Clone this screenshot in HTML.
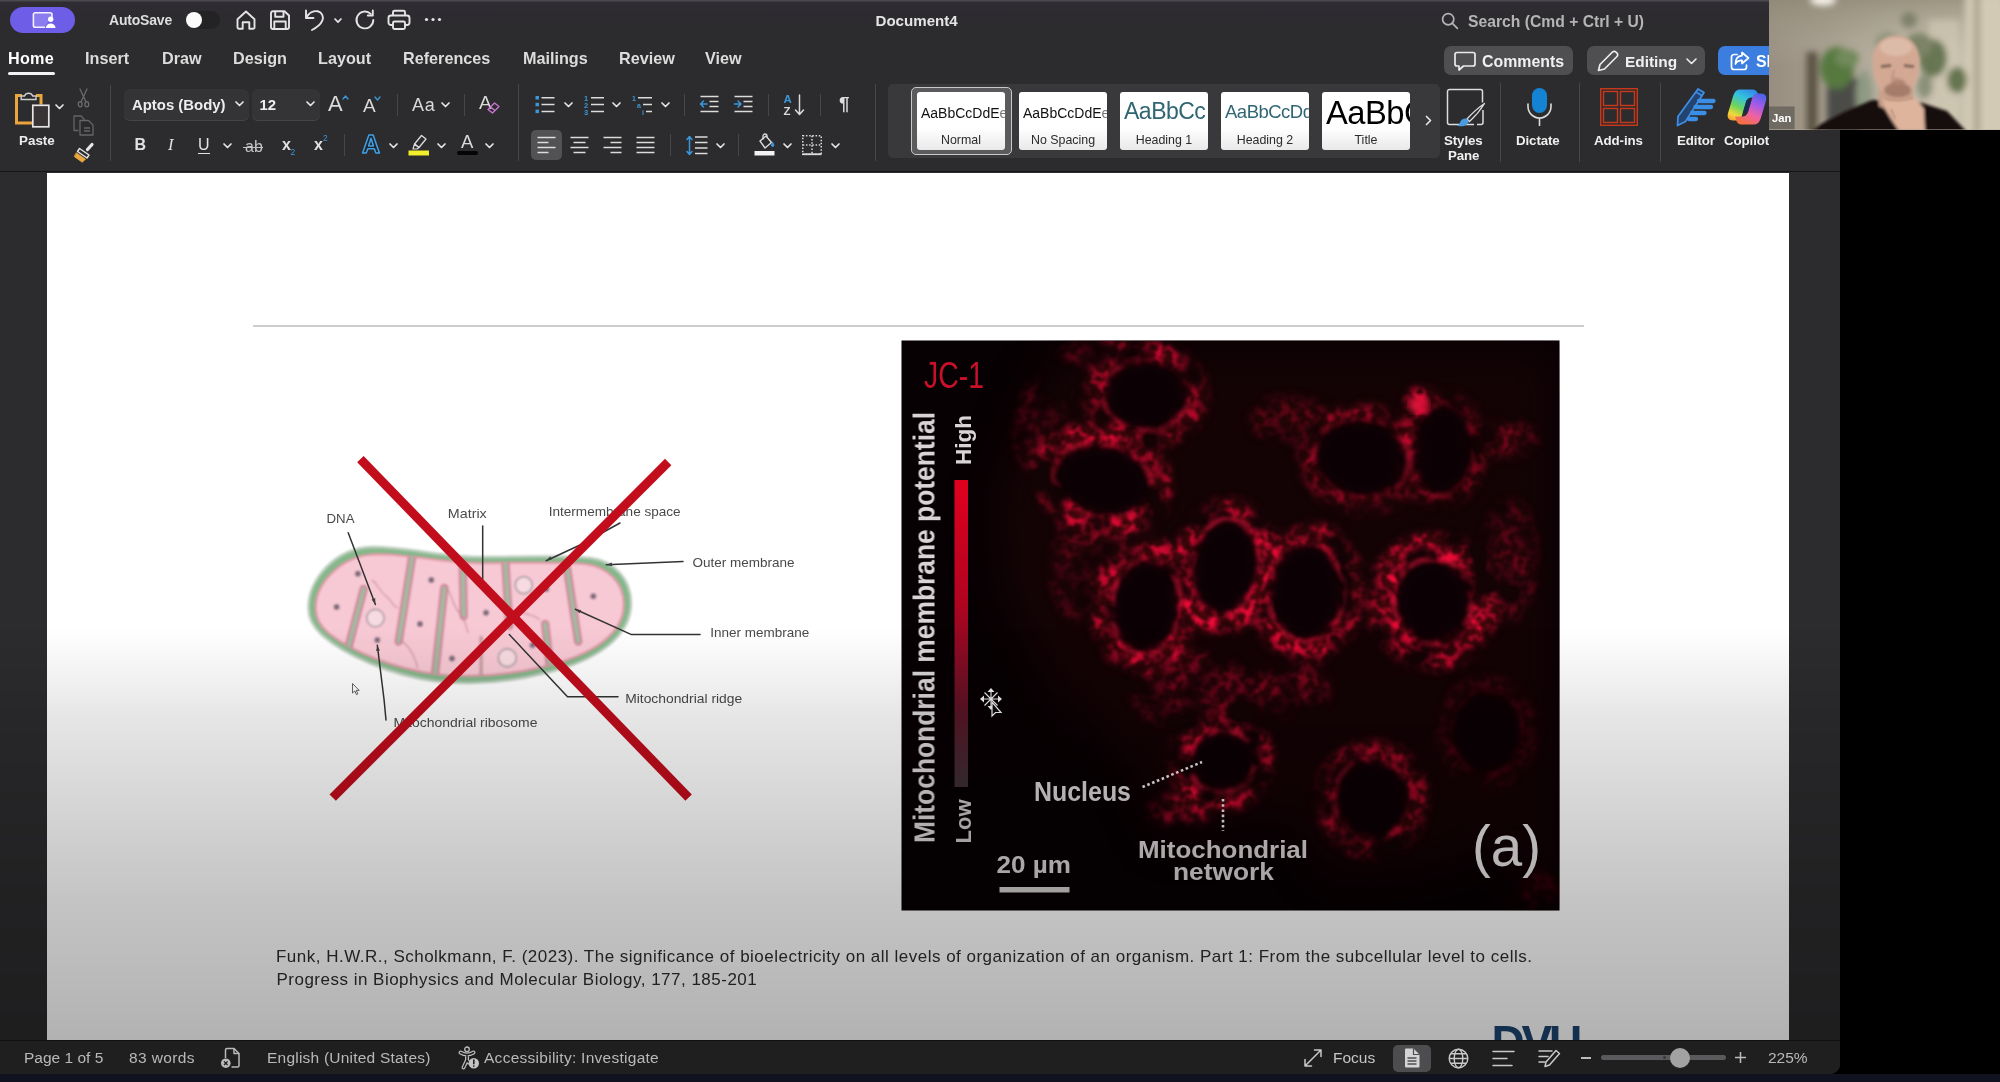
<!DOCTYPE html>
<html lang="en">
<head>
<meta charset="utf-8">
<title>Document4</title>
<style>
html,body{margin:0;padding:0;background:#000;}
body{width:2000px;height:1082px;overflow:hidden;position:relative;font-family:"Liberation Sans",sans-serif;color:#e6e6e6;}
.abs{position:absolute;}
#win{position:absolute;left:0;top:0;width:1840px;height:1074px;background:#2c2b2d;border-bottom-right-radius:10px;overflow:hidden;}
#topbar{position:absolute;left:0;top:0;width:1840px;height:172px;background:linear-gradient(to bottom,#4a4a4c 0,#4a4a4c 1px,#2f2c33 2px,#2d2b30 14px,#2c2b2d 30px,#2c2b2d 100%);border-bottom:1px solid #151515;box-sizing:border-box;}
#doc{position:absolute;left:47px;top:173px;width:1742px;height:867px;background:#fff;overflow:hidden;}
#shade{position:absolute;left:0;top:173px;width:1840px;height:867px;background:linear-gradient(to bottom,rgba(0,0,0,0) 0,rgba(0,0,0,0) 455px,rgba(0,0,0,0.03) 485px,rgba(0,0,0,0.1) 547px,rgba(0,0,0,0.16) 627px,rgba(0,0,0,0.23) 727px,rgba(0,0,0,0.30) 867px);pointer-events:none;}
#status{position:absolute;left:0;top:1040px;width:1840px;height:34px;background:#1f1f1f;border-top:1px solid #111;box-sizing:border-box;color:#b9b9b9;font-size:15.5px;}
#strip{position:absolute;left:0;top:1074px;width:2000px;height:8px;background:#10131f;}
#cam{position:absolute;left:1769.4px;top:0;width:231px;height:129.5px;overflow:hidden;background:#b9b3a4;}
.t{position:absolute;white-space:nowrap;line-height:1;}
#win,#cam{will-change:transform;}
.b{font-weight:bold;}
.tab{font-size:16.2px;color:#dcdcdc;}
.sep{position:absolute;width:1px;background:#474649;}
svg{position:absolute;overflow:visible;}
.card{position:absolute;top:92px;width:88px;height:58px;border-radius:3px;background:linear-gradient(to bottom,#fff 0,#fff 62%,#e9e9e9 100%);overflow:hidden;}
.ct{position:absolute;left:4px;width:84px;text-align:left;white-space:nowrap;line-height:1;overflow:hidden;}
.cl{position:absolute;left:0;top:42px;width:88px;text-align:center;font-size:12.4px;color:#2b2b2b;line-height:1;white-space:nowrap;}
.big{font-size:13.3px;color:#f0f0f0;letter-spacing:-0.1px;}
.cite{font-size:17px;color:#2e2e2e;letter-spacing:0.49px;}
.chev{fill:none;stroke:#e4e4e4;stroke-width:1.7;stroke-linecap:round;stroke-linejoin:round;}
</style>
</head>
<body>
<div id="win">
  <div id="topbar">
<!--TB1S-->
<!-- title row -->
<div class="abs" style="left:10.200px;top:6.900px;width:64.800px;height:25.800px;border-radius:13px;background:#6e5de6;"></div>
<svg style="left:32px;top:11px" width="25" height="18" viewBox="0 0 25 18"><path d="M12.500 16.200h-9.300a1.800 1.800 0 0 1-1.800-1.800v-10.800a1.800 1.800 0 0 1 1.800-1.800h15a1.800 1.800 0 0 1 1.800 1.800v2" fill="#8b7df0" stroke="#f4f2ff" stroke-width="1.600" stroke-linecap="round"/><circle cx="18.700" cy="8.300" r="2.700" fill="#fff"/><path d="M13.800 17c0.300-3 2.200-4.600 4.900-4.600s4.600 1.600 4.900 4.600z" fill="#fff"/></svg>
<div class="t b" id="t_autosave" style="left:109px;top:13.4px;font-size:14px;color:#dedede;letter-spacing:-0.2px;">AutoSave</div>
<div class="abs" style="left:187px;top:11px;width:33px;height:18px;border-radius:9px;background:#232224;"></div>
<div class="abs" style="left:186px;top:12px;width:16px;height:16px;border-radius:8px;background:#fbfbfb;"></div>
<!-- home -->
<svg style="left:235px;top:9px" width="22" height="22" viewBox="0 0 22 22" fill="none" stroke="#e4e4e4" stroke-width="1.9" stroke-linejoin="round" stroke-linecap="round"><path d="M2.500 10.200 11 2.500l8.500 7.700v8.300a1.200 1.200 0 0 1-1.200 1.200h-4v-6.400h-6.600v6.400h-4a1.200 1.200 0 0 1-1.200-1.200z"/></svg>
<!-- save -->
<svg style="left:269px;top:9px" width="22" height="22" viewBox="0 0 22 22" fill="none" stroke="#e4e4e4" stroke-width="1.9" stroke-linejoin="round"><path d="M2 4.200a2 2 0 0 1 2-2h11.500l4.500 4.300v11.500a2 2 0 0 1-2 2h-14a2 2 0 0 1-2-2z"/><path d="M6.200 2.500v5.300h8.300v-5.300"/><path d="M5.300 19.700v-7.200h11.400v7.200"/></svg>
<!-- undo -->
<svg style="left:304px;top:8px" width="22" height="24" viewBox="0 0 22 24" fill="none" stroke="#e4e4e4" stroke-width="1.9" stroke-linejoin="round" stroke-linecap="round"><path d="M2 2.500v7.500h7.500"/><path d="M2.300 9.700c2.500-4.600 7-7.400 11.500-6.400 4.200 1 6.200 5.300 4.500 9.400-1.600 3.800-5.600 6.900-10.300 9.300"/></svg>
<svg style="left:334px;top:18px" width="8" height="6" viewBox="0 0 8 6" fill="none" stroke="#e4e4e4" stroke-width="1.700" stroke-linecap="round" stroke-linejoin="round"><path d="M1 1l3 3.200 3-3.200"/></svg>
<!-- redo -->
<svg style="left:354px;top:9px" width="22" height="22" viewBox="0 0 22 22" fill="none" stroke="#e4e4e4" stroke-width="1.9" stroke-linejoin="round" stroke-linecap="round"><path d="M19.300 11a8.400 8.400 0 1 1-2.600-6.100"/><path d="M18.800 1.500v5h-5"/></svg>
<!-- print -->
<svg style="left:387px;top:9px" width="24" height="22" viewBox="0 0 24 22" fill="none" stroke="#e4e4e4" stroke-width="1.9" stroke-linejoin="round"><path d="M6 6.500v-3.200a1.500 1.500 0 0 1 1.500-1.500h9a1.500 1.500 0 0 1 1.500 1.500v3.200"/><rect x="1.500" y="6.500" width="21" height="9.500" rx="2.500"/><rect x="6" y="12.500" width="12" height="7.500" rx="1.500" fill="#2a292b"/></svg>
<!-- dots -->
<svg style="left:424px;top:17px" width="18" height="5" viewBox="0 0 18 5" fill="#e4e4e4"><circle cx="2.500" cy="2.500" r="1.600"/><circle cx="9" cy="2.500" r="1.600"/><circle cx="15.500" cy="2.500" r="1.600"/></svg>
<div class="t b" id="t_doc" style="left:875.5px;top:13px;font-size:15.1px;color:#e4e4e4;">Document4</div>
<!-- search -->
<svg style="left:1441px;top:12px" width="18" height="18" viewBox="0 0 18 18" fill="none" stroke="#b4b4b4" stroke-width="1.700" stroke-linecap="round"><circle cx="7.200" cy="7.200" r="5.600"/><path d="M11.400 11.400l5 5"/></svg>
<div class="t b" id="t_search" style="left:1468px;top:13.700px;font-size:15.700px;color:#b4b4b4;">Search (Cmd + Ctrl + U)</div>
<!-- tabs -->
<div class="t b" id="t_home" style="left:8px;top:49.900px;font-size:16.200px;color:#fff;letter-spacing:0.25px;">Home</div>
<div class="abs" style="left:8px;top:72px;width:47px;height:3px;border-radius:1.500px;background:#f2f2f2;"></div>
<div class="t b tab" id="t_insert" style="left:85px;top:49.900px;">Insert</div>
<div class="t b tab" id="t_draw" style="left:162px;top:49.900px;">Draw</div>
<div class="t b tab" id="t_design" style="left:233px;top:49.900px;">Design</div>
<div class="t b tab" id="t_layout" style="left:318px;top:49.900px;">Layout</div>
<div class="t b tab" id="t_refs" style="left:403px;top:49.900px;">References</div>
<div class="t b tab" id="t_mail" style="left:523px;top:49.900px;">Mailings</div>
<div class="t b tab" id="t_review" style="left:619px;top:49.900px;">Review</div>
<div class="t b tab" id="t_view" style="left:705px;top:49.900px;">View</div>
<!-- comments / editing / share -->
<div class="abs" style="left:1444px;top:46px;width:129px;height:29px;border-radius:7px;background:#4f4e51;"></div>
<svg style="left:1454px;top:51px" width="22" height="21" viewBox="0 0 22 21" fill="none" stroke="#ececec" stroke-width="1.700" stroke-linejoin="round"><path d="M3 1.500h16a2 2 0 0 1 2 2v9.500a2 2 0 0 1-2 2h-9.500l-4.500 4v-4h-2a2 2 0 0 1-2-2v-9.500a2 2 0 0 1 2-2z"/></svg>
<div class="t b" id="t_comments" style="left:1482px;top:53.500px;font-size:15.900px;color:#f0f0f0;">Comments</div>
<div class="abs" style="left:1587px;top:46px;width:118px;height:29px;border-radius:7px;background:#4f4e51;"></div>
<svg style="left:1597px;top:50px" width="22" height="22" viewBox="0 0 22 22" fill="none" stroke="#ececec" stroke-width="1.700" stroke-linejoin="round" stroke-linecap="round"><path d="M1.500 20.500l1.500-6 12.500-12.500a2.300 2.300 0 0 1 3.300 0l1.200 1.200a2.300 2.300 0 0 1 0 3.300l-12.500 12.500z"/></svg>
<div class="t b" id="t_editing" style="left:1625px;top:53.700px;font-size:15.400px;color:#f0f0f0;">Editing</div>
<svg style="left:1686px;top:58px" width="11" height="7" viewBox="0 0 11 7" fill="none" stroke="#ececec" stroke-width="1.600" stroke-linecap="round" stroke-linejoin="round"><path d="M1 1l4.500 4.500 4.500-4.500"/></svg>
<div class="abs" style="left:1718px;top:46px;width:80px;height:29px;border-radius:7px;background:#3c7ee0;"></div>
<svg style="left:1730px;top:51px" width="20" height="20" viewBox="0 0 20 20" fill="none" stroke="#fff" stroke-width="1.700" stroke-linejoin="round" stroke-linecap="round"><path d="M7 3.500h-3a2.500 2.500 0 0 0-2.500 2.500v10a2.500 2.500 0 0 0 2.500 2.500h10a2.500 2.500 0 0 0 2.500-2.500v-2"/><path d="M12 1.500l6.500 5.500-6.500 5.500v-3.200c-3.500 0-5.500 1.200-6.500 3.700 0-5 2.500-8 6.500-8.300z"/></svg>
<div class="t b" id="t_share" style="left:1756px;top:53.500px;font-size:15.900px;color:#fff;">Share</div>
<!--TB1E-->
<!--TB2S-->
<!-- clipboard group -->
<svg style="left:14px;top:89px" width="37" height="40" viewBox="0 0 37 40" fill="none">
<path d="M8 6.500h-5.500v27.500h15.500" stroke="#eaa63c" stroke-width="3"/>
<path d="M22 6.500h5v9" stroke="#eaa63c" stroke-width="3"/>
<path d="M7.200 10.500v-3.500h3.300a4.400 4.400 0 0 1 8.200 0h3.300v3.500z" stroke="#d0d0d0" stroke-width="1.400" fill="#2b2a2c"/>
<rect x="18.800" y="16.300" width="16" height="21.500" stroke="#e6e6e6" stroke-width="1.700" fill="#383436"/>
</svg>
<svg style="left:55px;top:104px" width="9" height="6" viewBox="0 0 9 6" fill="none" stroke="#e4e4e4" stroke-width="1.700" stroke-linecap="round" stroke-linejoin="round"><path d="M1 1l3.500 3.500 3.500-3.500"/></svg>
<div class="t b" id="t_paste" style="left:19px;top:133.500px;font-size:13.400px;color:#ececec;">Paste</div>
<!-- cut -->
<svg style="left:77px;top:88px" width="13" height="20" viewBox="0 0 13 20" fill="none" stroke="#6b6a6e" stroke-width="1.300" stroke-linecap="round"><path d="M3 1l6 13M10 1l-6 13"/><ellipse cx="3.200" cy="16.200" rx="1.900" ry="2.600"/><ellipse cx="9.800" cy="16.200" rx="1.900" ry="2.600"/></svg>
<!-- copy -->
<svg style="left:73px;top:115px" width="22" height="21" viewBox="0 0 22 21" fill="none" stroke="#656468" stroke-width="1.300" stroke-linejoin="round"><path d="M5.500 15.500h-4.500v-14.500h7l3 3v2"/><path d="M7 5.500h8.500l4.500 4.500v10h-13z" fill="#2a292b"/><path d="M11 13h6M11 16h6"/></svg>
<!-- format painter -->
<svg style="left:73px;top:141px" width="23" height="22" viewBox="0 0 23 22" fill="none" stroke-linejoin="round" stroke-linecap="round"><path d="M19 3.500l-4.500 5" stroke="#e8e8e8" stroke-width="3.200"/><path d="M6.500 7.500l9.500 6.500-2 3-9.500-6.500z" stroke="#e8e8e8" stroke-width="1.400" fill="#2b2a2c"/><path d="M3.500 12l9 6.200-3.300 3-7.700-5.500z" fill="#eaa83f" stroke="#eaa83f" stroke-width="0.800"/></svg>
<div class="sep" style="left:110px;top:85px;height:76px;"></div>
<!-- font boxes -->
<div class="abs" style="left:124px;top:89px;width:125px;height:31px;border-radius:6px;background:#343336;box-shadow:0 1px 0 #454447;"></div>
<div class="abs" style="left:252px;top:89px;width:68px;height:31px;border-radius:6px;background:#343336;box-shadow:0 1px 0 #454447;"></div>
<div class="t b" id="t_aptos" style="left:132px;top:97.500px;font-size:14.900px;color:#eeeeee;">Aptos (Body)</div>
<svg class="chev" style="left:235px;top:101px" width="9" height="6" viewBox="0 0 9 6"><path d="M1 1l3.500 3.500 3.500-3.500"/></svg>
<div class="t b" id="t_12" style="left:259.500px;top:97.500px;font-size:14.900px;color:#eeeeee;">12</div>
<svg class="chev" style="left:306px;top:101px" width="9" height="6" viewBox="0 0 9 6"><path d="M1 1l3.500 3.500 3.500-3.500"/></svg>
<!-- A^ Av -->
<div class="t" id="t_Abig" style="left:328px;top:93px;font-size:22px;color:#dadada;">A</div>
<svg style="left:342px;top:95px" width="7" height="5" viewBox="0 0 7 5" fill="none" stroke="#3b97d9" stroke-width="1.300" stroke-linecap="round" stroke-linejoin="round"><path d="M1 4l2.500-3 2.500 3"/></svg>
<div class="t" id="t_Asm" style="left:363px;top:96px;font-size:19px;color:#dadada;">A</div>
<svg style="left:374px;top:96px" width="7" height="5" viewBox="0 0 7 5" fill="none" stroke="#3b97d9" stroke-width="1.300" stroke-linecap="round" stroke-linejoin="round"><path d="M1 1l2.500 3 2.500-3"/></svg>
<div class="sep" style="left:397px;top:94px;height:22px;"></div>
<div class="t" id="t_Aa" style="left:412px;top:96px;font-size:18px;color:#dadada;letter-spacing:0.8px;">Aa</div>
<svg class="chev" style="left:441px;top:102px" width="9" height="6" viewBox="0 0 9 6"><path d="M1 1l3.500 3.500 3.500-3.500"/></svg>
<div class="sep" style="left:464px;top:94px;height:22px;"></div>
<div class="t" id="t_Aclr" style="left:479px;top:93px;font-size:19px;color:#dadada;">A</div>
<svg style="left:487px;top:101px" width="13" height="13" viewBox="0 0 13 13" fill="none" stroke="#c874d0" stroke-width="1.400" stroke-linejoin="round"><path d="M1 8.500l6.500-6.500 4.500 3.500-6.500 6.500z"/><path d="M3.500 6l4.500 3.500"/></svg>
<!-- row 2 -->
<div class="t b" id="t_B" style="left:134.500px;top:137px;font-size:16px;color:#e2e2e2;">B</div>
<div class="t" id="t_I" style="left:168px;top:137px;font-size:16.500px;color:#e2e2e2;font-family:'Liberation Serif',serif;font-style:italic;">I</div>
<div class="t" id="t_U" style="left:198px;top:137px;font-size:16px;color:#e2e2e2;">U</div>
<div class="abs" style="left:198px;top:152.500px;width:12px;height:1.400px;background:#e2e2e2;"></div>
<svg class="chev" style="left:223px;top:143px" width="9" height="6" viewBox="0 0 9 6"><path d="M1 1l3.500 3.500 3.500-3.500"/></svg>
<div class="t" id="t_ab" style="left:245px;top:138.500px;font-size:16px;color:#c4c4c4;">ab</div>
<div class="abs" style="left:243px;top:147px;width:20px;height:1.300px;background:#c4c4c4;"></div>
<div class="t b" id="t_x2" style="left:282px;top:137px;font-size:16px;color:#e2e2e2;">x</div>
<div class="t" id="t_x2s" style="left:290.500px;top:148px;font-size:8.500px;color:#3b97d9;">2</div>
<div class="t b" id="t_x3" style="left:314px;top:137px;font-size:16px;color:#e2e2e2;">x</div>
<div class="t" id="t_x3s" style="left:323px;top:134px;font-size:8.500px;color:#3b97d9;">2</div>
<div class="sep" style="left:344px;top:134px;height:22px;"></div>
<svg style="left:360px;top:132px" width="22" height="24" viewBox="0 0 22 24"><text x="11" y="21" text-anchor="middle" font-family="Liberation Sans, sans-serif" font-weight="bold" font-size="25" fill="#20242b" stroke="#3fa0e6" stroke-width="1.500" stroke-linejoin="round">A</text></svg>
<svg class="chev" style="left:389px;top:143px" width="9" height="6" viewBox="0 0 9 6"><path d="M1 1l3.500 3.500 3.500-3.500"/></svg>
<svg style="left:408px;top:133px" width="22" height="24" viewBox="0 0 22 24" fill="none" stroke-linejoin="round"><rect x="0.500" y="17.500" width="20.500" height="5" fill="#f3ee2d"/><path d="M13.500 2.500l4.500 3.500-7 8.500-4.500-3.500z" stroke="#dcdcdc" stroke-width="1.300"/><path d="M6.500 11l4.500 3.500-2 1.500h-4z" stroke="#dcdcdc" stroke-width="1.200"/></svg>
<svg class="chev" style="left:437px;top:143px" width="9" height="6" viewBox="0 0 9 6"><path d="M1 1l3.500 3.500 3.500-3.500"/></svg>
<div class="t" id="t_Afc" style="left:461px;top:133px;font-size:18.500px;color:#dadada;">A</div>
<div class="abs" style="left:457px;top:150.700px;width:20.500px;height:4.300px;border-radius:2px;background:#050505;"></div>
<svg class="chev" style="left:485px;top:143px" width="9" height="6" viewBox="0 0 9 6"><path d="M1 1l3.500 3.500 3.500-3.500"/></svg>
<div class="sep" style="left:518px;top:84px;height:77px;"></div>
<!--TB2E-->
<!--TB3S-->
<!-- paragraph group row1 -->
<svg style="left:535px;top:95px" width="20" height="19" viewBox="0 0 20 19" fill="none"><g fill="#3b97d9"><rect x="0.500" y="1" width="3.500" height="3.500"/><rect x="0.500" y="7.800" width="3.500" height="3.500"/><rect x="0.500" y="14.600" width="3.500" height="3.500"/></g><g stroke="#dcdcdc" stroke-width="1.500"><path d="M6.500 2.800h13M6.500 9.600h13M6.500 16.400h13"/></g></svg>
<svg class="chev" style="left:564px;top:102px" width="9" height="6" viewBox="0 0 9 6"><path d="M1 1l3.500 3.500 3.500-3.500"/></svg>
<svg style="left:584px;top:94px" width="21" height="21" viewBox="0 0 21 21" fill="none"><g font-family="Liberation Sans, sans-serif" font-size="7.500" font-weight="bold" fill="#3b97d9"><text x="0" y="6.500">1</text><text x="0" y="13.500">2</text><text x="0" y="20.500">3</text></g><g stroke="#dcdcdc" stroke-width="1.500"><path d="M7 3.800h13M7 10.600h13M7 17.400h13"/></g></svg>
<svg class="chev" style="left:612px;top:102px" width="9" height="6" viewBox="0 0 9 6"><path d="M1 1l3.500 3.500 3.500-3.500"/></svg>
<svg style="left:632px;top:94px" width="21" height="21" viewBox="0 0 21 21" fill="none"><g font-family="Liberation Sans, sans-serif" font-size="7" font-weight="bold" fill="#3b97d9"><text x="0" y="6.500">1</text><text x="5" y="13.500">a</text><text x="10" y="20.500">i</text></g><g stroke="#dcdcdc" stroke-width="1.500"><path d="M6 3.800h14M11 10.600h9M14 17.400h6"/></g></svg>
<svg class="chev" style="left:661px;top:102px" width="9" height="6" viewBox="0 0 9 6"><path d="M1 1l3.500 3.500 3.500-3.500"/></svg>
<div class="sep" style="left:684px;top:94px;height:22px;"></div>
<svg style="left:700px;top:95px" width="19" height="19" viewBox="0 0 19 19" fill="none" stroke="#dcdcdc" stroke-width="1.500"><path d="M0.500 1.500h18M9.500 6.500h9M9.500 11.500h9M0.500 16.500h18"/><path d="M7 9h-6.500M3.500 6l-3 3 3 3" stroke="#3b97d9" stroke-linecap="round" stroke-linejoin="round"/></svg>
<svg style="left:733.500px;top:95px" width="19" height="19" viewBox="0 0 19 19" fill="none" stroke="#dcdcdc" stroke-width="1.500"><path d="M0.500 1.500h18M9.500 6.500h9M9.500 11.500h9M0.500 16.500h18"/><path d="M0.500 9h6.500M4 6l3 3-3 3" stroke="#3b97d9" stroke-linecap="round" stroke-linejoin="round"/></svg>
<div class="sep" style="left:768px;top:94px;height:22px;"></div>
<svg style="left:783px;top:93px" width="23" height="24" viewBox="0 0 23 24" fill="none"><text x="0.500" y="10" font-family="Liberation Sans, sans-serif" font-size="11.500" font-weight="bold" fill="#3b97d9">A</text><text x="0.500" y="22" font-family="Liberation Sans, sans-serif" font-size="11.500" font-weight="bold" fill="#dcdcdc">Z</text><path d="M16.500 2v19M12.500 17l4 4.500 4-4.500" stroke="#dcdcdc" stroke-width="1.500" stroke-linecap="round" stroke-linejoin="round"/></svg>
<div class="sep" style="left:820px;top:94px;height:22px;"></div>
<div class="t b" id="t_pil" style="left:839px;top:94px;font-size:19px;color:#dcdcdc;">¶</div>
<!-- row2 -->
<div class="abs" style="left:531px;top:130px;width:31px;height:30px;border-radius:5px;background:#525154;"></div>
<svg style="left:537px;top:136px" width="19" height="19" viewBox="0 0 19 19" fill="none" stroke="#dcdcdc" stroke-width="1.500"><path d="M0.500 1.500h18M0.500 6.500h11M0.500 11.500h18M0.500 16.500h11"/></svg>
<svg style="left:570px;top:136px" width="19" height="19" viewBox="0 0 19 19" fill="none" stroke="#dcdcdc" stroke-width="1.500"><path d="M0.500 1.500h18M3.500 6.500h12M0.500 11.500h18M3.500 16.500h12"/></svg>
<svg style="left:603px;top:136px" width="19" height="19" viewBox="0 0 19 19" fill="none" stroke="#dcdcdc" stroke-width="1.500"><path d="M0.500 1.500h18M7.500 6.500h11M0.500 11.500h18M7.500 16.500h11"/></svg>
<svg style="left:636px;top:136px" width="19" height="19" viewBox="0 0 19 19" fill="none" stroke="#dcdcdc" stroke-width="1.500"><path d="M0.500 1.500h18M0.500 6.500h18M0.500 11.500h18M0.500 16.500h18"/></svg>
<div class="sep" style="left:670px;top:134px;height:22px;"></div>
<svg style="left:686px;top:135px" width="22" height="21" viewBox="0 0 22 21" fill="none" stroke="#dcdcdc" stroke-width="1.500"><path d="M9 2h12.500M9 7.500h12.500M9 13h12.500M9 18.500h12.500"/><path d="M3.500 2v17M1 4.500l2.500-3 2.500 3M1 16.500l2.500 3 2.500-3" stroke="#3b97d9" stroke-linecap="round" stroke-linejoin="round"/></svg>
<svg class="chev" style="left:715.500px;top:143px" width="9" height="6" viewBox="0 0 9 6"><path d="M1 1l3.500 3.500 3.500-3.500"/></svg>
<div class="sep" style="left:738px;top:134px;height:22px;"></div>
<svg style="left:754px;top:133px" width="22" height="24" viewBox="0 0 22 24" fill="none" stroke-linejoin="round"><rect x="0.500" y="18" width="20" height="4.500" fill="#f2f2f2"/><path d="M6 8l6-5 5.500 6.500-6.500 5.500z" stroke="#dcdcdc" stroke-width="1.400"/><path d="M9 6.500v-3.500a2 2 0 0 1 4 0v1" stroke="#dcdcdc" stroke-width="1.300"/><path d="M18.500 8.500c1 1.500 1.800 2.800 1.800 3.800a1.600 1.600 0 0 1-3.200 0c0-1 0.600-2.300 1.400-3.800z" fill="#3b97d9"/></svg>
<svg class="chev" style="left:782.500px;top:143px" width="9" height="6" viewBox="0 0 9 6"><path d="M1 1l3.500 3.500 3.500-3.500"/></svg>
<svg style="left:802px;top:135px" width="20" height="20" viewBox="0 0 20 20" fill="none" stroke="#dcdcdc"><path d="M0.750 0.750h18.500v18.500h-18.500zM10 0.750v18.500M0.750 10h18.500" stroke-width="1.500" stroke-dasharray="1.500 1.700"/><path d="M0.500 19.250h19" stroke-width="1.800"/></svg>
<svg class="chev" style="left:830.500px;top:143px" width="9" height="6" viewBox="0 0 9 6"><path d="M1 1l3.500 3.500 3.500-3.500"/></svg>
<div class="sep" style="left:875px;top:84px;height:77px;"></div>
<!-- styles gallery -->
<div class="abs" style="left:888px;top:84px;width:552px;height:74px;border-radius:5px;background:#39383b;"></div>
<div class="abs" style="left:911px;top:87px;width:101px;height:68px;border-radius:5px;box-sizing:border-box;border:1.500px solid #c9c9c9;background:#5b5a5d;"></div>
<div class="card" style="left:917px;"><div class="ct" id="t_c1" style="font-size:14px;color:#111;top:14px;">AaBbCcDdE<span style="color:#777">e</span></div><div class="cl" id="t_l1">Normal</div></div>
<div class="card" style="left:1019px;"><div class="ct" id="t_c2" style="font-size:14px;color:#111;top:14px;">AaBbCcDdE<span style="color:#777">e</span></div><div class="cl" id="t_l2">No Spacing</div></div>
<div class="card" style="left:1120px;"><div class="ct" id="t_c3" style="font-size:23px;color:#2f6672;top:8px;letter-spacing:-0.5px;">AaBbCc</div><div class="cl" id="t_l3">Heading 1</div></div>
<div class="card" style="left:1221px;"><div class="ct" id="t_c4" style="font-size:18.500px;color:#2f6672;top:11px;letter-spacing:-0.5px;">AaBbCcDd</div><div class="cl" id="t_l4">Heading 2</div></div>
<div class="card" style="left:1322px;"><div class="ct" id="t_c5" style="font-size:32.700px;color:#000;top:4.500px;letter-spacing:-0.5px;">AaBbC</div><div class="cl" id="t_l5">Title</div></div>
<svg class="chev" style="left:1425px;top:115px" width="7" height="11" viewBox="0 0 7 11"><path d="M1.500 1.500l4 4-4 4"/></svg>
<!-- big buttons -->
<svg style="left:1446px;top:88px" width="41" height="40" viewBox="0 0 41 40" fill="none" stroke-linejoin="round"><path d="M28 36.500h-24.500a2 2 0 0 1-2-2v-31a2 2 0 0 1 2-2h31a2 2 0 0 1 2 2v11" stroke="#dcdcdc" stroke-width="1.500"/><path d="M37 22v12.500a2 2 0 0 1-2 2h-4" stroke="#dcdcdc" stroke-width="1.500"/><path d="M38.500 15.500c-6 4-12 9.500-17.500 15.500l2.500 2.500c6-5.500 11-11.500 15-18z" stroke="#dcdcdc" stroke-width="1.300" fill="#2a292b"/><path d="M20.500 30.500c-3-0.500-5.500 1-6.500 4-0.500 1.500-1.500 2.500-3 3 3.500 1.500 8 1 10.500-1.500 1.500-1.500 1.500-3.500-1-5.500z" fill="#4a9be0"/></svg>
<div class="t b big" id="t_styles" style="left:1444px;top:133.500px;">Styles</div>
<div class="t b big" id="t_pane" style="left:1448px;top:148.500px;">Pane</div>
<div class="sep" style="left:1500px;top:83px;height:79px;"></div>
<svg style="left:1526px;top:87px" width="27" height="40" viewBox="0 0 27 40" fill="none"><rect x="6" y="1" width="15" height="25" rx="7.500" fill="#1583d4"/><path d="M2 17v2.500a11.500 11.500 0 0 0 23 0v-2.500" stroke="#dcdcdc" stroke-width="1.600" stroke-linecap="round"/><path d="M13.500 31v8" stroke="#dcdcdc" stroke-width="1.600"/></svg>
<div class="t b big" id="t_dictate" style="left:1516px;top:133.500px;">Dictate</div>
<div class="sep" style="left:1579px;top:83px;height:79px;"></div>
<svg style="left:1600px;top:88px" width="38" height="38" viewBox="0 0 38 38" fill="none" stroke="#c8391c" stroke-width="1.400"><rect x="0.700" y="0.700" width="36.600" height="36.600"/><rect x="3.500" y="3.500" width="14" height="14"/><rect x="20.500" y="3.500" width="14" height="14"/><rect x="3.500" y="20.500" width="14" height="14"/><rect x="20.500" y="20.500" width="14" height="14"/></svg>
<div class="t b big" id="t_addins" style="left:1594px;top:133.500px;">Add-ins</div>
<div class="sep" style="left:1660px;top:83px;height:79px;"></div>
<svg style="left:1676px;top:87px" width="40" height="40" viewBox="0 0 40 40" fill="none" stroke-linejoin="round"><path d="M22 2l6 3.500-18.500 29-8 4 0.500-9z" fill="#24436e" stroke="#3b8ee6" stroke-width="1.800"/><path d="M20 5l6.500 4" stroke="#3b8ee6" stroke-width="1.600"/><g stroke="#3b8ee6" stroke-width="4.300" stroke-linecap="round"><path d="M23 14h14.500M19.500 20h15.500M16 26h12.500M13 32h7"/></g></svg>
<div class="t b big" id="t_editor" style="left:1677px;top:133.500px;">Editor</div>
<svg style="left:1727px;top:88px" width="40" height="38" viewBox="0 0 40 38" fill="none"><defs><linearGradient id="cg1" x1="0.700" y1="0" x2="0.200" y2="1"><stop offset="0" stop-color="#2f8fe8"/><stop offset="0.300" stop-color="#35c3dc"/><stop offset="0.600" stop-color="#6fd45a"/><stop offset="0.850" stop-color="#f3d93a"/><stop offset="1" stop-color="#f5a53a"/></linearGradient><linearGradient id="cg2" x1="0.800" y1="0" x2="0.300" y2="1"><stop offset="0" stop-color="#4a63ea"/><stop offset="0.350" stop-color="#a95ae6"/><stop offset="0.650" stop-color="#ee62a4"/><stop offset="1" stop-color="#f5703a"/></linearGradient><filter id="cpb"><feGaussianBlur stdDeviation="0.400"/></filter></defs><g filter="url(#cpb)"><path d="M13 1.500h12.500c2.600 0 4.400 1.400 5.200 3.800l1.300 4.200h-7.500c-2.600 0-4.400 1.400-5.200 3.800l-4.600 15c-0.800 2.600-2.800 4.200-5.400 4.200h-3.300c-4.300 0-6.300-3-5-7.200l5-16.800c1.400-4.600 3.400-7 7-7z" fill="url(#cg1)"/><path d="M27 36.500h-12.500c-2.600 0-4.400-1.400-5.200-3.800l-1.300-4.200h7.500c2.600 0 4.400-1.400 5.200-3.800l4.600-15c0.800-2.600 2.800-4.200 5.400-4.200h3.300c4.300 0 6.300 3 5 7.200l-5 16.800c-1.400 4.600-3.400 7-7 7z" fill="url(#cg2)"/><path d="M19.500 12l-3.600 12.500h5l3.600-12.500z" fill="#1a2a55" opacity="0.850"/></g></svg>
<div class="t b big" id="t_copilot" style="left:1724px;top:133.500px;">Copilot</div>
<!--TB3E-->
  </div>
  <div id="doc">
<!--DOCS-->
<div class="abs" style="left:-47px;top:-173px;width:2000px;height:1082px;">
<div class="abs" style="left:252.500px;top:325px;width:1331px;height:2px;background:#cdcdcd;"></div>
<div class="t cite" id="t_cite1" style="left:276px;top:947.600px;">Funk, H.W.R., Scholkmann, F. (2023). The significance of bioelectricity on all levels of organization of an organism. Part 1: From the subcellular level to cells.</div>
<div class="t cite" id="t_cite2" style="left:276.500px;top:971.100px;">Progress in Biophysics and Molecular Biology, 177, 185-201</div>
<div class="t b" id="t_dvu" style="left:1491.500px;top:1019px;font-size:46px;color:#1d4571;letter-spacing:-3.200px;">DVU</div>
<svg style="left:0;top:0" width="2000" height="1082" viewBox="0 0 2000 1082">
<defs><filter id="soft" x="-5%" y="-5%" width="110%" height="110%"><feGaussianBlur stdDeviation="0.800"/></filter>
<filter id="soft2" x="-5%" y="-5%" width="110%" height="110%"><feGaussianBlur stdDeviation="0.550"/></filter>
<clipPath id="inclip"><path d="M308.5 608C308 580 335 548 372 547C410 547 440 557 480 557C520 557 560 555 590 558C615 561 631 580 631 603C631 635 600 660 545 673C510 682 470 685 435 681C390 675 345 655 322 635C312 626 308.5 618 308.5 608z" transform="translate(469.7 615.5) scale(0.955 0.895) translate(-469.7 -615.5)"/></clipPath></defs>
<g filter="url(#soft)">
<path d="M308.5 608C308 580 335 548 372 547C410 547 440 557 480 557C520 557 560 555 590 558C615 561 631 580 631 603C631 635 600 660 545 673C510 682 470 685 435 681C390 675 345 655 322 635C312 626 308.5 618 308.5 608z" fill="#84b78a" stroke="#bccdbd" stroke-width="2.500"/>
<path d="M308.5 608C308 580 335 548 372 547C410 547 440 557 480 557C520 557 560 555 590 558C615 561 631 580 631 603C631 635 600 660 545 673C510 682 470 685 435 681C390 675 345 655 322 635C312 626 308.5 618 308.5 608z" transform="translate(469.7 615.5) scale(0.955 0.895) translate(-469.7 -615.5)" fill="#f7c9d4" stroke="#e394a8" stroke-width="2.200"/>
<g clip-path="url(#inclip)" fill="none"><path d="M348.2 648.0L363.7 589.0" stroke="#d67f99" stroke-width="8.5" stroke-linecap="round"/><path d="M412.3 556.0L398.7 641.4" stroke="#d67f99" stroke-width="8.5" stroke-linecap="round"/><path d="M434.6 678.0L444.3 588.0" stroke="#d67f99" stroke-width="8.5" stroke-linecap="round"/><path d="M462.7 563.0L463.7 616.0" stroke="#d67f99" stroke-width="8.5" stroke-linecap="round"/><path d="M505.4 563.0L509.3 625.8" stroke="#d67f99" stroke-width="8.5" stroke-linecap="round"/><path d="M545.2 624.0L550.0 667.0" stroke="#d67f99" stroke-width="8.5" stroke-linecap="round"/><path d="M566.5 565.0L578.2 641.4" stroke="#d67f99" stroke-width="8.5" stroke-linecap="round"/><path d="M348.2 648.0L363.7 589.0" stroke="#a3b9a0" stroke-width="4.6" stroke-linecap="round"/><path d="M412.3 556.0L398.7 641.4" stroke="#a3b9a0" stroke-width="4.6" stroke-linecap="round"/><path d="M434.6 678.0L444.3 588.0" stroke="#a3b9a0" stroke-width="4.6" stroke-linecap="round"/><path d="M462.7 563.0L463.7 616.0" stroke="#a3b9a0" stroke-width="4.6" stroke-linecap="round"/><path d="M505.4 563.0L509.3 625.8" stroke="#a3b9a0" stroke-width="4.6" stroke-linecap="round"/><path d="M545.2 624.0L550.0 667.0" stroke="#a3b9a0" stroke-width="4.6" stroke-linecap="round"/><path d="M566.5 565.0L578.2 641.4" stroke="#a3b9a0" stroke-width="4.6" stroke-linecap="round"/><path d="M481.100 680L481.100 636" stroke="#dc8fa5" stroke-width="3.500"/><path d="M481.100 680L481.100 636" stroke="#a3b9a0" stroke-width="1.200"/><path d="M372 580c6 4 8 12 14 16s6 10 12 12M444 585c8 6 8 20 14 26s8 14 10 22M400 640c10 6 14 16 18 28M520 610c6 6 14 4 20 10" fill="none" stroke="#c9899b" stroke-width="1.100"/></g>
<circle cx="375.4" cy="618.1" r="8.7" fill="#f8dbe2" stroke="#a79aa3" stroke-width="1.600"/><circle cx="523.8" cy="585.1" r="8.5" fill="#f8dbe2" stroke="#a79aa3" stroke-width="1.600"/><circle cx="507.3" cy="657.9" r="9.0" fill="#f8dbe2" stroke="#a79aa3" stroke-width="1.600"/>
<circle cx="357.9" cy="573.8" r="3" fill="#7d6a7c"/><circle cx="336.6" cy="607.0" r="3" fill="#7d6a7c"/><circle cx="431.3" cy="579.9" r="3" fill="#7d6a7c"/><circle cx="420.0" cy="623.9" r="3" fill="#7d6a7c"/><circle cx="486.0" cy="612.8" r="3" fill="#7d6a7c"/><circle cx="377.3" cy="640.0" r="3" fill="#7d6a7c"/><circle cx="452.0" cy="658.4" r="3" fill="#7d6a7c"/><circle cx="593.3" cy="596.2" r="3" fill="#7d6a7c"/><circle cx="546.2" cy="589.0" r="3" fill="#7d6a7c"/><circle cx="532.6" cy="645.2" r="3" fill="#7d6a7c"/>
</g><g filter="url(#soft2)"><g fill="none" stroke="#333" stroke-width="1.500" stroke-linecap="round" stroke-linejoin="round">
<path d="M348.200 532.700L375.400 604.500"/><path d="M482.700 526L482.700 579.300"/><path d="M620 523L580 545L546.200 560.800"/>
<path d="M683 561.500L606.300 564.700"/><path d="M575.300 609.300L631.500 634.600L700 634.600"/>
<path d="M509.300 634.600L567.500 696.700L618 696.700"/><path d="M377.300 645.200L384.100 700L386 720"/>
</g>
<g fill="#3e3e3e"><path d="M375.400 604.500l-3.800-5 3.600-1.400z"/><path d="M546.200 560.800l4-4.600 1.600 3.400z"/><path d="M606.300 564.700l5.500-2.200 0.200 3.800z"/><path d="M575.300 609.300l5.800 0.600-1.600 3.400z"/><path d="M377.300 645.200l2.600 5.400-3.800 0.400z"/></g>
</g>
<g filter="url(#soft2)" font-family="Liberation Sans, sans-serif" font-size="12.600" fill="#4a4a4a">
<text x="326.500" y="522.500" textLength="28" lengthAdjust="spacingAndGlyphs">DNA</text>
<text x="447.800" y="518" textLength="39" lengthAdjust="spacingAndGlyphs">Matrix</text>
<text x="548.700" y="515.800" textLength="132" lengthAdjust="spacingAndGlyphs">Intermembrane space</text>
<text x="692.500" y="566.500" textLength="102" lengthAdjust="spacingAndGlyphs">Outer membrane</text>
<text x="710.300" y="637" textLength="99" lengthAdjust="spacingAndGlyphs">Inner membrane</text>
<text x="625.200" y="702.500" textLength="117" lengthAdjust="spacingAndGlyphs">Mitochondrial ridge</text>
<text x="393.400" y="727.300" textLength="144" lengthAdjust="spacingAndGlyphs">Mitochondrial ribosome</text>
</g>
<g filter="url(#soft2)" stroke="#c1101f" stroke-width="9" stroke-linecap="butt">
<path d="M360.400 459.100L688.600 797.600"/><path d="M668.200 462L332.700 797.600"/>
</g>
<path d="M352.500 683.500v9.500l2.300-2 1.700 3.600 1.400-0.700-1.700-3.500h3z" fill="#fff" stroke="#555" stroke-width="0.900"/>
</svg>
<svg style="left:0;top:0" width="2000" height="1082" viewBox="0 0 2000 1082">
<defs>
<filter id="mb" color-interpolation-filters="sRGB" x="-10%" y="-10%" width="120%" height="120%"><feGaussianBlur stdDeviation="5"/></filter>
<filter id="gb" color-interpolation-filters="sRGB" x="-10%" y="-10%" width="120%" height="120%"><feGaussianBlur stdDeviation="22"/></filter>
<filter id="nb" color-interpolation-filters="sRGB" x="-10%" y="-10%" width="120%" height="120%"><feGaussianBlur stdDeviation="3"/></filter>
<filter id="speck" x="0" y="0" width="100%" height="100%" color-interpolation-filters="sRGB"><feTurbulence type="fractalNoise" baseFrequency="0.11" numOctaves="2" seed="7"/><feColorMatrix type="matrix" values="0 0 0 0 0.95  0 0 0 0 0.04  0 0 0 0 0.22  4.2 0 0 0 -1.75"/><feGaussianBlur stdDeviation="0.9"/></filter>
<filter id="tb" color-interpolation-filters="sRGB" x="-5%" y="-5%" width="110%" height="110%"><feGaussianBlur stdDeviation="0.7"/></filter>
<filter id="blotch" x="0" y="0" width="100%" height="100%" color-interpolation-filters="sRGB"><feTurbulence type="fractalNoise" baseFrequency="0.03" numOctaves="2" seed="11"/><feColorMatrix type="matrix" values="0 0 0 0 0  0 0 0 0 0  0 0 0 0 0  3.2 0 0 0 -1.25"/></filter>
<mask id="rings" maskUnits="userSpaceOnUse" x="901.5" y="340.5" width="658" height="570"><g filter="url(#mb)"><ellipse cx="1146" cy="395" rx="50" ry="42" transform="rotate(0 1146 395)" fill="none" stroke="#fff" stroke-opacity="0.75" stroke-width="22"/><ellipse cx="1103" cy="480" rx="57" ry="44" transform="rotate(15 1103 480)" fill="none" stroke="#fff" stroke-opacity="0.9" stroke-width="24"/><ellipse cx="1225" cy="567" rx="40" ry="56" transform="rotate(10 1225 567)" fill="none" stroke="#fff" stroke-opacity="1" stroke-width="22"/><ellipse cx="1146" cy="606" rx="42" ry="56" transform="rotate(5 1146 606)" fill="none" stroke="#fff" stroke-opacity="0.85" stroke-width="24"/><ellipse cx="1306" cy="592" rx="45" ry="58" transform="rotate(0 1306 592)" fill="none" stroke="#fff" stroke-opacity="0.9" stroke-width="24"/><ellipse cx="1433" cy="601" rx="50" ry="53" transform="rotate(0 1433 601)" fill="none" stroke="#fff" stroke-opacity="1" stroke-width="30"/><ellipse cx="1361" cy="458" rx="53" ry="45" transform="rotate(10 1361 458)" fill="none" stroke="#fff" stroke-opacity="0.55" stroke-width="20"/><ellipse cx="1442" cy="450" rx="36" ry="50" transform="rotate(5 1442 450)" fill="none" stroke="#fff" stroke-opacity="0.45" stroke-width="16"/><ellipse cx="1222" cy="761" rx="40" ry="38" transform="rotate(0 1222 761)" fill="none" stroke="#fff" stroke-opacity="1" stroke-width="22"/><ellipse cx="1372" cy="799" rx="45" ry="47" transform="rotate(0 1372 799)" fill="none" stroke="#fff" stroke-opacity="0.65" stroke-width="22"/><ellipse cx="1487" cy="732" rx="41" ry="47" transform="rotate(0 1487 732)" fill="none" stroke="#fff" stroke-opacity="0.18" stroke-width="18"/><ellipse cx="1420" cy="402" rx="15" ry="14" fill="#fff" fill-opacity="0.9"/><ellipse cx="1500" cy="440" rx="40" ry="18" fill="#fff" fill-opacity="0.5"/><ellipse cx="1510" cy="560" rx="28" ry="60" fill="#fff" fill-opacity="0.35"/><ellipse cx="1190" cy="690" rx="60" ry="40" fill="#fff" fill-opacity="0.4"/><ellipse cx="1075" cy="560" rx="25" ry="60" fill="#fff" fill-opacity="0.3"/><ellipse cx="1040" cy="430" rx="25" ry="50" fill="#fff" fill-opacity="0.3"/><ellipse cx="1110" cy="350" rx="60" ry="14" fill="#fff" fill-opacity="0.4"/><ellipse cx="1290" cy="690" rx="40" ry="25" fill="#fff" fill-opacity="0.45"/><ellipse cx="1290" cy="420" rx="40" ry="25" fill="#fff" fill-opacity="0.3"/><ellipse cx="1180" cy="810" rx="30" ry="16" fill="#fff" fill-opacity="0.7"/><ellipse cx="1540" cy="890" rx="16" ry="20" fill="#fff" fill-opacity="0.25"/></g><rect x="901.5" y="340.5" width="658" height="570" filter="url(#blotch)"/></mask>
<filter id="rb" color-interpolation-filters="sRGB" x="-10%" y="-10%" width="120%" height="120%"><feGaussianBlur stdDeviation="2.2"/></filter>
<filter id="blotch2" x="0" y="0" width="100%" height="100%" color-interpolation-filters="sRGB"><feTurbulence type="fractalNoise" baseFrequency="0.045" numOctaves="2" seed="23"/><feColorMatrix type="matrix" values="0 0 0 0 1  0 0 0 0 1  0 0 0 0 1  3.5 0 0 0 -1.35"/></filter>
<mask id="rimmask" maskUnits="userSpaceOnUse" x="901.5" y="340.5" width="658" height="570"><rect x="901.5" y="340.5" width="658" height="570" filter="url(#blotch2)"/></mask>
<clipPath id="mclip"><rect x="901.5" y="340.5" width="658" height="570"/></clipPath>
<linearGradient id="cbar" x1="0" y1="0" x2="0" y2="1"><stop offset="0" stop-color="#e0001e"/><stop offset="0.4" stop-color="#b00420"/><stop offset="0.75" stop-color="#5a1426"/><stop offset="1" stop-color="#3c3036"/></linearGradient>
</defs>
<rect x="901.5" y="340.5" width="658" height="570" fill="#070103"/>
<g clip-path="url(#mclip)">
<g filter="url(#gb)" opacity="0.8"><path d="M1060 345L1559 345L1559 905L1530 905L1500 840L1440 870L1330 880L1290 820L1250 830L1160 840L1130 760L1060 700L1000 600L990 500L1030 400z" fill="#170406"/></g>
<g mask="url(#rings)"><rect x="901.5" y="340.5" width="658" height="570" fill="#42070c"/><rect x="901.5" y="340.5" width="658" height="570" filter="url(#speck)"/></g>
<g filter="url(#nb)" opacity="0.85"><ellipse cx="1146" cy="395" rx="40" ry="32" transform="rotate(0 1146 395)" fill="#0b0205"/><ellipse cx="1103" cy="480" rx="46" ry="33" transform="rotate(15 1103 480)" fill="#0b0205"/><ellipse cx="1225" cy="567" rx="30" ry="46" transform="rotate(10 1225 567)" fill="#0b0205"/><ellipse cx="1146" cy="606" rx="31" ry="45" transform="rotate(5 1146 606)" fill="#0b0205"/><ellipse cx="1306" cy="592" rx="34" ry="47" transform="rotate(0 1306 592)" fill="#0b0205"/><ellipse cx="1433" cy="601" rx="36" ry="39" transform="rotate(0 1433 601)" fill="#0b0205"/><ellipse cx="1361" cy="458" rx="44" ry="36" transform="rotate(10 1361 458)" fill="#0b0205"/><ellipse cx="1442" cy="450" rx="29" ry="43" transform="rotate(5 1442 450)" fill="#0b0205"/><ellipse cx="1222" cy="761" rx="30" ry="28" transform="rotate(0 1222 761)" fill="#0b0205"/><ellipse cx="1372" cy="799" rx="35" ry="37" transform="rotate(0 1372 799)" fill="#0b0205"/><ellipse cx="1487" cy="732" rx="33" ry="39" transform="rotate(0 1487 732)" fill="#0b0205"/></g>
<g filter="url(#nb)" id="brightblob"><ellipse cx="1419" cy="404" rx="10" ry="9" fill="#e4123c" opacity="0.9"/><ellipse cx="1414" cy="408" rx="4" ry="4" fill="#f5204a" opacity="0.6"/></g>
<g mask="url(#rimmask)"><g filter="url(#rb)"><ellipse cx="1146" cy="395" rx="43.5" ry="35.5" transform="rotate(0 1146 395)" fill="none" stroke="#e8143c" stroke-opacity="0.45" stroke-width="5"/><ellipse cx="1103" cy="480" rx="49.5" ry="36.5" transform="rotate(15 1103 480)" fill="none" stroke="#e8143c" stroke-opacity="0.54" stroke-width="5"/><ellipse cx="1225" cy="567" rx="33.5" ry="49.5" transform="rotate(10 1225 567)" fill="none" stroke="#e8143c" stroke-opacity="0.6" stroke-width="5"/><ellipse cx="1146" cy="606" rx="34.5" ry="48.5" transform="rotate(5 1146 606)" fill="none" stroke="#e8143c" stroke-opacity="0.51" stroke-width="5"/><ellipse cx="1306" cy="592" rx="37.5" ry="50.5" transform="rotate(0 1306 592)" fill="none" stroke="#e8143c" stroke-opacity="0.54" stroke-width="5"/><ellipse cx="1433" cy="601" rx="39.5" ry="42.5" transform="rotate(0 1433 601)" fill="none" stroke="#e8143c" stroke-opacity="0.6" stroke-width="5"/><ellipse cx="1361" cy="458" rx="47.5" ry="39.5" transform="rotate(10 1361 458)" fill="none" stroke="#e8143c" stroke-opacity="0.33" stroke-width="5"/><ellipse cx="1442" cy="450" rx="32.5" ry="46.5" transform="rotate(5 1442 450)" fill="none" stroke="#e8143c" stroke-opacity="0.27" stroke-width="5"/><ellipse cx="1222" cy="761" rx="33.5" ry="31.5" transform="rotate(0 1222 761)" fill="none" stroke="#e8143c" stroke-opacity="0.6" stroke-width="5"/><ellipse cx="1372" cy="799" rx="38.5" ry="40.5" transform="rotate(0 1372 799)" fill="none" stroke="#e8143c" stroke-opacity="0.39" stroke-width="5"/><ellipse cx="1487" cy="732" rx="36.5" ry="42.5" transform="rotate(0 1487 732)" fill="none" stroke="#e8143c" stroke-opacity="0.108" stroke-width="5"/></g></g>
</g>
<g filter="url(#tb)" font-family="Liberation Sans, sans-serif">
<text x="924" y="387.500" font-size="37" fill="#c8102a" textLength="60" lengthAdjust="spacingAndGlyphs">JC-1</text>
<text transform="translate(934.500 843) rotate(-90)" font-size="29" font-weight="bold" fill="#d9d5d6" textLength="431" lengthAdjust="spacingAndGlyphs">Mitochondrial membrane potential</text>
<text transform="translate(970.500 465) rotate(-90)" font-size="22.500" font-weight="bold" fill="#d9d5d6" textLength="50" lengthAdjust="spacingAndGlyphs">High</text>
<text transform="translate(970.500 843.500) rotate(-90)" font-size="22.500" font-weight="bold" fill="#c9c5c6" textLength="44" lengthAdjust="spacingAndGlyphs">Low</text>
<rect x="954.500" y="480" width="13.500" height="307" fill="url(#cbar)"/>
<text x="1034" y="800.500" font-size="28" font-weight="bold" fill="#d6d2d3" textLength="97" lengthAdjust="spacingAndGlyphs">Nucleus</text>
<text x="1138" y="858" font-size="24.500" font-weight="bold" fill="#d6d2d3" textLength="170" lengthAdjust="spacingAndGlyphs">Mitochondrial</text>
<text x="1173" y="879.800" font-size="24.500" font-weight="bold" fill="#d6d2d3" textLength="101" lengthAdjust="spacingAndGlyphs">network</text>
<text x="996.500" y="873" font-size="24.500" font-weight="bold" fill="#d6d2d3" textLength="74.500" lengthAdjust="spacingAndGlyphs">20 µm</text>
<rect x="999.500" y="887" width="70" height="5.500" fill="#d2cecf"/>
<text x="1472" y="866" font-size="57" fill="#e6e2e3" textLength="69" lengthAdjust="spacingAndGlyphs">(a)</text>
<path d="M1142.500 787L1202 762" stroke="#e8e4e5" stroke-width="2.600" stroke-dasharray="2.600 2.600"/>
<path d="M1223 799L1223 831" stroke="#e8e4e5" stroke-width="2.600" stroke-dasharray="2.600 2.600"/>
</g>
<!-- move cursor -->
<g transform="translate(991 699)" fill="none" stroke="#f0f0f0" stroke-width="1.100"><path d="M-9 0h18M0 -9v18M-6.500 -6.500l13 13M6.500 -6.500l-13 13"/><path d="M0 -11l-3.500 4h7zM0 11l-3.500 -4h7zM-11 0l4 -3.500v7zM11 0l-4 -3.500v7z" fill="#f0f0f0" stroke="none"/><path d="M1 3v14l3.500 -3.500 5.500 0z" fill="#0a0a0a" stroke="#f4f4f4" stroke-width="1.200"/></g>
</svg>
</div>
<!--DOCE-->
  </div>
  <div id="shade"></div>
  <div id="status">
<!--STS-->
<div class="t" id="t_page" style="left:24px;top:9px;">Page 1 of 5</div>
<div class="t" id="t_words" style="left:129px;top:9px;letter-spacing:0.39px;">83 words</div>
<svg style="left:220px;top:6px" width="21" height="22" viewBox="0 0 21 22" fill="none" stroke="#b9b9b9" stroke-width="1.500" stroke-linejoin="round"><path d="M5.500 11v-8a1.500 1.500 0 0 1 1.500-1.500h7l5 5v12a1.500 1.500 0 0 1-1.500 1.500h-6"/><path d="M14 1.500v5h5"/><circle cx="5.800" cy="16.200" r="4.800" fill="#b9b9b9" stroke="none"/><path d="M4 14.400l3.600 3.600M7.600 14.400l-3.600 3.600" stroke="#1f1f1f" stroke-width="1.300"/></svg>
<div class="t" id="t_lang" style="left:267px;top:9px;letter-spacing:0.22px;">English (United States)</div>
<svg style="left:458px;top:5px" width="22" height="24" viewBox="0 0 22 24" fill="none" stroke-linecap="round" stroke-linejoin="round"><g stroke="#bdbdbd" stroke-width="4"><path d="M2.500 6.500c4 2.500 9 2.500 13 0M9 8.500v5.500M9 14l-3.500 7.500M9 14l1.500 2.500"/></g><g stroke="#1f1f1f" stroke-width="1.500"><path d="M2.500 6.500c4 2.500 9 2.500 13 0M9 8.500v5.500M9 14l-3.500 7.500M9 14l1.500 2.500"/></g><circle cx="9" cy="3.300" r="2.300" fill="#1f1f1f" stroke="#bdbdbd" stroke-width="1.300"/><circle cx="15.800" cy="17.200" r="5.200" fill="#c4c4c4"/><path d="M15.800 14v3.800M15.800 20v0.200" stroke="#1f1f1f" stroke-width="1.600"/></svg>
<div class="t" id="t_acc" style="left:484px;top:9px;letter-spacing:0.27px;">Accessibility: Investigate</div>
<svg style="left:1303px;top:7px" width="20" height="20" viewBox="0 0 20 20" fill="none" stroke="#c9c9c9" stroke-width="1.500" stroke-linecap="round" stroke-linejoin="round"><path d="M2 18l16-16M11.500 2h6.500v6.500M2 11.500v6.500h6.500"/></svg>
<div class="t" id="t_focus" style="left:1333px;top:9px;color:#c6c6c6;">Focus</div>
<div class="abs" style="left:1393px;top:4px;width:38px;height:27px;border-radius:5px;background:#4d4c4f;"></div>
<svg style="left:1404px;top:7px" width="16" height="20" viewBox="0 0 16 20"><path d="M2 0.500h7.500l6 6v12a1 1 0 0 1-1 1h-12.500a1 1 0 0 1-1-1v-17a1 1 0 0 1 1-1z" fill="#d4d4d4"/><path d="M9.500 0.500v6h6" fill="none" stroke="#4d4c4f" stroke-width="1.200"/><path d="M3.500 10h9M3.500 13h9M3.500 16h9" stroke="#4d4c4f" stroke-width="1.300"/></svg>
<svg style="left:1448px;top:7px" width="21" height="21" viewBox="0 0 21 21" fill="none" stroke="#c9c9c9" stroke-width="1.400"><circle cx="10.500" cy="10.500" r="9.300"/><ellipse cx="10.500" cy="10.500" rx="4.300" ry="9.300"/><path d="M1.200 10.500h18.600M2.500 5.800h16M2.500 15.200h16"/></svg>
<svg style="left:1492px;top:9px" width="23" height="17" viewBox="0 0 23 17" fill="none" stroke="#c9c9c9" stroke-width="1.500" stroke-linecap="round"><path d="M1 1.500h21M1 8.500h14M1 15.500h19"/></svg>
<svg style="left:1538px;top:7px" width="23" height="20" viewBox="0 0 23 20" fill="none" stroke="#c9c9c9" stroke-width="1.500" stroke-linecap="round" stroke-linejoin="round"><path d="M1 3h13M1 8.500h9M1 14h6"/><path d="M18 2.500l3.500 3-10 11.500-4.500 1.500 1-4.500z"/></svg>
<div class="abs" style="left:1581px;top:16px;width:10px;height:1.500px;background:#bdbdbd;"></div>
<div class="abs" style="left:1601px;top:14px;width:125px;height:5px;border-radius:2.500px;background:#5a595c;"></div>
<div class="abs" style="left:1663px;top:15px;width:3px;height:3px;border-radius:2px;background:#3a393c;"></div>
<div class="abs" style="left:1670px;top:6.500px;width:20px;height:20px;border-radius:10px;background:#a2a2a2;"></div>
<svg style="left:1735px;top:11px" width="11" height="11" viewBox="0 0 11 11" fill="none" stroke="#bdbdbd" stroke-width="1.500"><path d="M0 5.500h11M5.500 0v11"/></svg>
<div class="t" id="t_zoom" style="left:1768px;top:9px;">225%</div>
<!--STE-->
  </div>
</div>
<div id="strip"></div>
<div id="cam">
<!--CAMS-->
<svg style="left:0;top:0" width="231" height="130" viewBox="0 0 231 130">
<defs>
<linearGradient id="cbg" x1="0" y1="0" x2="1" y2="0"><stop offset="0" stop-color="#978d80"/><stop offset="0.250" stop-color="#a59c8d"/><stop offset="0.550" stop-color="#bbb4a3"/><stop offset="0.800" stop-color="#c8c0ac"/><stop offset="1" stop-color="#c4bba6"/></linearGradient>
<linearGradient id="ctop" x1="0" y1="0" x2="0" y2="1"><stop offset="0" stop-color="#8f8975" stop-opacity="0.750"/><stop offset="0.250" stop-color="#a09a88" stop-opacity="0.350"/><stop offset="0.500" stop-color="#c0baa8" stop-opacity="0"/></linearGradient>
<filter id="cb1" x="-30%" y="-30%" width="160%" height="160%"><feGaussianBlur stdDeviation="3.200"/></filter>
<filter id="cb2" x="-30%" y="-30%" width="160%" height="160%"><feGaussianBlur stdDeviation="1.500"/></filter>
<filter id="cb3" x="-30%" y="-30%" width="160%" height="160%"><feGaussianBlur stdDeviation="1.100"/></filter>
<clipPath id="cclip"><rect x="0" y="0" width="231" height="129.500"/></clipPath>
</defs>
<g clip-path="url(#cclip)">
<rect x="0" y="0" width="231" height="130" fill="url(#cbg)"/>
<rect x="0" y="0" width="231" height="130" fill="url(#ctop)"/>
<g filter="url(#cb1)">
<ellipse cx="54" cy="0" rx="13" ry="5.500" fill="#f6f2ea"/>
<rect x="196" y="-5" width="40" height="140" fill="#d3cab5"/>
<rect x="205" y="-5" width="6" height="140" fill="#a9a08a"/>
<rect x="160" y="20" width="30" height="100" fill="#cfc7b2" opacity="0.700"/>
<rect x="37.500" y="52" width="11" height="85" fill="#5c5344"/>
<rect x="58" y="78" width="32" height="55" fill="#4b4c47"/>
<ellipse cx="68" cy="68" rx="17" ry="21" fill="#56793f"/>
<ellipse cx="78" cy="58" rx="12" ry="9" fill="#728a5c"/>
<ellipse cx="95" cy="95" rx="8" ry="25" fill="#8f9a84"/>
<ellipse cx="140" cy="20" rx="8" ry="8" fill="#777b60" opacity="0.850"/>
<ellipse cx="164" cy="58" rx="14" ry="19" fill="#5d6d49" opacity="0.900"/>
<ellipse cx="150" cy="45" rx="14" ry="12" fill="#7b8366"/>
<ellipse cx="188" cy="80" rx="10" ry="13" fill="#66744f"/>
<ellipse cx="156" cy="86" rx="8" ry="12" fill="#7d866a" opacity="0.800"/>
<ellipse cx="118" cy="42" rx="12" ry="10" fill="#8a9078" opacity="0.800"/>
</g>
<g filter="url(#cb2)">
<path d="M40 134L52 124L75 112L103 100L150 102L178 111L196 130L200 136z" fill="#14110e"/>
<path d="M110 88h34v18l-16 8-18-8z" fill="#c99f88"/>
<path d="M127 35.500c14 0 23.500 10 23.500 25c0 8-1 14-3 20c-3 9-10 18-20.500 18s-17.500-9-20.500-18c-2-6-3-12-3-20c0-15 9.500-25 23.500-25z" fill="#d3a994"/>
<ellipse cx="127" cy="47" rx="16" ry="9" fill="#dcbca9"/>
<ellipse cx="128.500" cy="90" rx="13.500" ry="7.500" fill="#a47c69"/>
<ellipse cx="129" cy="82" rx="7" ry="3" fill="#b08672"/>
<path d="M114 98c8 3 22 2 32-1l9 12 1 22h-26l-8-12-6-10z" fill="#dfb49d"/>
</g>
<g filter="url(#cb3)">
<path d="M112 66.500l10-1M135 65.500l10 1.200" stroke="#7a5e50" stroke-width="2.800" fill="none" opacity="0.850"/><path d="M125 70l-2 9h7" stroke="#b98f7b" stroke-width="1.500" fill="none"/>
<path d="M116 98.500c6 2.500 18 2.500 28-0.500" stroke="#a9806b" stroke-width="1.200" fill="none"/>
<path d="M122 109l4 10" stroke="#b58c78" stroke-width="1.500" fill="none"/>
</g>
<rect x="0" y="106.500" width="25.600" height="23" fill="#6b675f" opacity="0.920"/>
</g>
</svg>
<div class="t b" id="t_jan" style="left:3px;top:113.300px;font-size:11.300px;color:#fff;">Jan</div>
<!--CAME-->
</div>
</body>
</html>
